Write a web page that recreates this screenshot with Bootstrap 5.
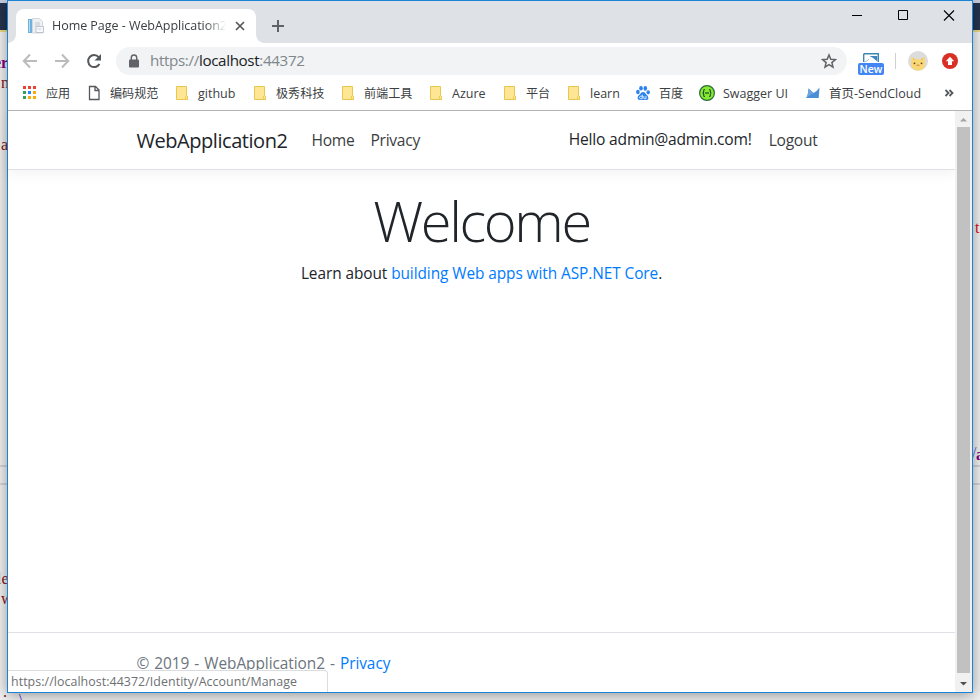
<!DOCTYPE html>
<html lang="en">
<head>
<meta charset="utf-8">
<title>Home Page - WebApplication2</title>
<link href="https://cdn.jsdelivr.net/npm/bootstrap@5.3.0/dist/css/bootstrap.min.css" rel="stylesheet">
<style>
html,body{height:700px;overflow:hidden}
body{font-family:"Open Sans","Noto Sans","Noto Sans CJK SC",sans-serif;color:#212529;background:#e9e9e9;line-height:1.5}
.desk{width:980px;height:700px;overflow:hidden;background:#f2f2f3}
.ide-bar{left:0;right:0;top:0;height:32px;background:#26344f;border-top:3px solid #c9cfdf;border-bottom:2px solid #efdc85}
.ide-rule{left:0;right:0;height:20px;border:2px solid #d5d5db;border-width:2px 0;top:465px}
.code{font:16px/18px "Liberation Serif",serif;color:#8b1010;white-space:pre}
.win{left:7px;top:0;width:966px;height:693px;border:1px solid #1883d7;background:#fff;box-shadow:0 2px 14px rgba(0,0,0,.4)}
.strip{height:42px;background:#dee1e6;flex:none}
.tab-on{width:240px;height:34px;margin:8px 0 0 8px;background:#fff;border-radius:8px 8px 0 0;padding:0 10px 0 12px;font-size:13px;color:#3c4043}
.tab-on::before,.tab-on::after{content:"";position:absolute;bottom:0;width:8px;height:8px}
.tab-on::before{left:-8px;background:radial-gradient(circle at 0 0,transparent 7.5px,#fff 8px)}
.tab-on::after{right:-8px;background:radial-gradient(circle at 100% 0,transparent 7.5px,#fff 8px)}
.tab-name{width:174px;margin-left:8px;padding-top:1px;overflow:hidden;white-space:nowrap;font-size:12.5px;letter-spacing:-.04px;-webkit-mask-image:linear-gradient(90deg,#000 88%,transparent);mask-image:linear-gradient(90deg,#000 88%,transparent)}
.tools{height:36px;flex:none;padding-left:14px}
.omni{width:731px;height:28px;border-radius:14px;background:#f1f3f4;margin-left:14px;padding:0 10px 0 12px}
.url{font-size:15.2px;letter-spacing:-.36px;color:#80868b;margin-left:10px;padding-bottom:2px}
.url b{font-weight:400;color:#202124}
.marks{height:31px;flex:none;display:grid;grid-template-columns:64px 88px 78px 88px 88px 74px 64px 69px 64px 106px 131px 20px;padding:0 0 3px 14px;font-size:12.5px;color:#3c4043}
.mk{display:flex;align-items:center;white-space:nowrap}
.mk span{padding-top:2px}
.mk svg{width:16px;height:16px;flex:none;margin-right:8px}
.mk-cjk{font-size:12.1px}
.view{border-top:1px solid #b4b4b4;min-height:0}
.page-c{width:690px;margin:0 auto}
.topnav{height:59px;padding-top:2px;border-bottom:1px solid #dee2e6;box-shadow:0 4px 12px rgba(0,0,0,.05)}
.brand{font-size:20px;letter-spacing:-.45px;color:#212529}
.lnk{font-size:15.6px;letter-spacing:-.28px;color:#3b3e41}
.hello{letter-spacing:-.2px;padding-bottom:2px;color:#212529}
.hero{font-size:56px;font-weight:300;line-height:1.2;letter-spacing:-2.35px;margin:17px 0 8px}
.learn{font-size:15.4px;letter-spacing:-.07px}
.blue{color:#007bff}
.foot{height:60px;padding-top:2px;border-top:1px solid #dee2e6;color:#6c757d;font-size:15.4px;letter-spacing:-.05px;word-spacing:1.1px}
.sb{width:17px;background:#f1f1f1;flex:none}
.thumb{width:13px;background:#c1c1c1;height:546px}
.stat{left:0;bottom:0;width:320px;height:22px;background:#fff;border:1px solid #dadce0;border-width:1px 1px 0 0;border-radius:0 4px 0 0;color:#6d7073;font-size:12.4px;letter-spacing:.06px;line-height:21px;padding-left:3px;white-space:nowrap}
.new{font-size:10.5px;font-weight:600;line-height:12px;background:#4285f4;color:#fff;width:26px;height:12px;border-radius:2px;text-align:center}
</style>
<script src="https://cdn.jsdelivr.net/npm/bootstrap@5.3.0/dist/js/bootstrap.bundle.min.js"></script>
</head>
<body>
<svg width="0" height="0" class="position-absolute"><defs>
<symbol id="folder" viewBox="0 0 16 16"><path d="M2.500 1.500h10v10h1v3h-11z" fill="#ffe694" stroke="#e9c64d"/><path d="M11.500 14V11q1-1.500 2 0v3.500z" fill="#ffe694" stroke="#e9c64d" stroke-width=".8"/></symbol>
</defs></svg>
<div class="desk position-relative">
  <div class="ide-bar position-absolute"></div>
  <div class="ide-rule position-absolute"></div>
  <div class="code position-absolute fw-bold" style="left:-6px;top:54px;color:#800080">er</div>
  <div class="code position-absolute" style="left:1px;top:74px">n</div>
  <div class="code position-absolute" style="left:1px;top:136px">a</div>
  <div class="code position-absolute" style="left:-3px;top:570px">le</div>
  <div class="code position-absolute" style="left:1px;top:590px">w</div>
  <div class="code position-absolute" style="left:3px;top:683px">.</div>
  <div class="code position-absolute" style="left:19px;top:691px;color:#5a20d0">\</div>
  <div class="code position-absolute" style="left:975px;top:219px;color:#e01010">t</div>
  <div class="code position-absolute" style="left:972px;top:444px;color:#4a5ae0">/</div>
  <div class="code position-absolute fw-bold" style="left:976px;top:446px;color:#800080">a</div>

  <div class="win position-absolute d-flex flex-column">
    <div class="strip d-flex">
      <div class="tab-on position-relative d-flex align-items-center">
        <svg width="16" height="16" viewBox="0 0 16 16"><path d="M0 1h4v14H0z" fill="#6eb1dc"/><path d="M1 2h1v12H1z" fill="#b7dcf1"/><path d="M4.500.5h7l3 3V15h-10z" fill="#edf0f4" stroke="#d3d8df"/><path d="M7 5h5M7 7h5" stroke="#c5cad1"/><path d="M8 8.500h7.500v6H8z" fill="#f8f9fb" stroke="#bdc4ce"/><path d="M9.500 11h4" stroke="#cbd1d8"/></svg>
        <span class="tab-name">Home Page - WebApplication2</span>
        <svg class="ms-auto" width="12" height="12" viewBox="0 0 12 12"><path d="M2 2l8 8M10 2l-8 8" stroke="#54575b" stroke-width="1.700"/></svg>
      </div>
      <svg class="mt-3" style="margin-left:15px" width="14" height="16" viewBox="0 0 14 16"><path d="M1 9h12M7 3v12" stroke="#5f6368" stroke-width="2"/></svg>
      <div class="ms-auto d-flex" style="gap:34px;padding:9px 17px 0 0">
        <svg width="12" height="12"><path d="M1 5.500h10" stroke="#000"/></svg>
        <svg width="12" height="12"><path d="M1.500.5h9v9h-9z" stroke="#000" fill="none"/></svg>
        <svg width="12" height="12"><path d="M1 .5l10 10M11 .5L1 10.500" stroke="#000" stroke-width="1.100"/></svg>
      </div>
    </div>
    <div class="tools d-flex align-items-center">
      <svg width="16" height="16" viewBox="0 0 16 16"><path d="M15 8H2M8 1.500L1.800 8 8 14.500" stroke="#b9bbbd" stroke-width="2" fill="none"/></svg>
      <svg class="ms-3" width="16" height="16" viewBox="0 0 16 16"><path d="M1 8h13M8 1.500L14.200 8 8 14.500" stroke="#b9bbbd" stroke-width="2" fill="none"/></svg>
      <svg class="ms-3" width="16" height="16" viewBox="0 0 16 16"><path d="M13.400 11A6 6 0 1 1 12.700 4.200" stroke="#55585d" stroke-width="2" fill="none"/><path d="M15 1v6.500H8.500z" fill="#55585d"/></svg>
      <div class="omni d-flex align-items-center">
        <svg width="12" height="14" viewBox="0 0 12 14"><path d="M2 5.500h8q1 0 1 1v6q0 1-1 1H2q-1 0-1-1v-6q0-1 1-1z" fill="#5f6368"/><path d="M3.300 6V3.700a2.700 2.700 0 0 1 5.400 0V6" stroke="#5f6368" stroke-width="1.400" fill="none"/></svg>
        <span class="url">https://<b>localhost</b>:44372</span>
        <svg class="ms-auto" width="16" height="16" viewBox="0 0 16 16"><path d="M8 2l1.800 4.200 4.600.4-3.500 3 1.100 4.500L8 11.700 4 14.100l1.100-4.500-3.500-3 4.600-.4z" fill="none" stroke="#5f6368" stroke-width="1.500"/></svg>
      </div>
      <div class="d-flex flex-column align-items-center" style="margin-left:11px;padding-top:6px">
        <svg width="16" height="10" viewBox="0 0 16 10"><path d="M.7.7h14.600V9M.7.7V9" fill="none" stroke="#3d87b5" stroke-width="1.400"/><path d="M6.500 3h7.800v5.500q-3-3.500-7.800-5.500z" fill="#3d87c0"/><path d="M1 9q4-1 5-3" stroke="#9bc5df" fill="none"/></svg>
        <div class="new">New</div>
      </div>
      <div style="width:1px;height:16px;background:#cfd1d4;margin-left:11px"></div>
      <svg style="margin-left:12px" width="20" height="20" viewBox="0 0 20 20"><circle cx="10" cy="10" r="10" fill="#dcdcdc"/><path d="M3.500 5.500l3.500 2.700h6l3.500-2.700.6 7.500q-.8 6.500-7.100 6.500T3 13z" fill="#f8d775"/><path d="M5 7l2 2M15 7l-2 2" stroke="#edb85a"/><circle cx="6.500" cy="12.300" r=".9" fill="#574025"/><circle cx="13.500" cy="12.300" r=".9" fill="#574025"/><path d="M8.500 14.500L10 14l1.500.5" stroke="#d37a58" fill="none"/></svg>
      <svg style="margin-left:14px" width="16" height="16" viewBox="0 0 16 16"><circle cx="8" cy="8" r="8" fill="#d93025"/><path d="M8 3.800l4.200 4.400H10V12H6V8.200H3.800z" fill="#fff"/></svg>
    </div>
    <div class="marks">
      <div class="mk mk-cjk"><svg viewBox="0 0 16 16"><path d="M1 1h3v3H1zM6 1h3v3H6zM11 1h3v3h-3z" fill="#ea4335"/><path d="M1 6h3v3H1zM1 11h3v3H1z" fill="#34a05a"/><path d="M6 6h3v3H6z" fill="#2684fc"/><path d="M11 6h3v3h-3zM6 11h3v3H6zM11 11h3v3h-3z" fill="#fbac06"/></svg><span>应用</span></div>
      <div class="mk mk-cjk"><svg viewBox="0 0 16 16"><path d="M3.500 1.500h6l3.500 3.500v9.500H3.500zM9 1.500v4h4" fill="#fff" stroke="#55585c" stroke-width="1.300"/></svg><span>编码规范</span></div>
      <div class="mk"><svg><use href="#folder"/></svg><span>github</span></div>
      <div class="mk mk-cjk"><svg><use href="#folder"/></svg><span>极秀科技</span></div>
      <div class="mk mk-cjk"><svg><use href="#folder"/></svg><span>前端工具</span></div>
      <div class="mk"><svg><use href="#folder"/></svg><span>Azure</span></div>
      <div class="mk mk-cjk"><svg><use href="#folder"/></svg><span>平台</span></div>
      <div class="mk"><svg><use href="#folder"/></svg><span>learn</span></div>
      <div class="mk mk-cjk"><svg viewBox="0 0 16 16"><g fill="#2d83ee"><ellipse cx="2.900" cy="7" rx="1.800" ry="2.200"/><ellipse cx="6" cy="3.200" rx="1.800" ry="2.300"/><ellipse cx="10.300" cy="3.400" rx="1.800" ry="2.300"/><ellipse cx="13.200" cy="7.300" rx="1.700" ry="2.100"/><path d="M8 7q2 0 3 2.200 3 2 2.500 4.300-.8 2-3.500 1.500H5.500Q2.500 15.300 2.500 13q0-2 2.500-3.800Q6.200 7 8 7z"/></g><path d="M7.300 9.700v4H5.700q-1.200-.2-1.200-1.200t1.200-1.300h1.600M8.800 11v2.200q0 .5.600.5H11V11" fill="none" stroke="#fff" stroke-width=".8"/></svg><span>百度</span></div>
      <div class="mk"><svg viewBox="0 0 16 16"><circle cx="8" cy="8" r="7.400" fill="#85ea2d" stroke="#2c6a3e" stroke-width="1.200"/><path d="M6 4.500q-1.500 0-1.300 1.700Q4.700 8 3.500 8q1.200 0 1.200 1.800-.2 1.700 1.300 1.700M10 4.500q1.500 0 1.300 1.700Q11.300 8 12.500 8q-1.200 0-1.200 1.800.2 1.700-1.300 1.700" fill="none" stroke="#254d36" stroke-width="1.200"/><path d="M6 8h4" stroke="#254d36" stroke-width="1.300"/></svg><span>Swagger UI</span></div>
      <div class="mk"><svg viewBox="0 0 16 16"><path d="M1 13q2-1.500 2.500-9.500l5 4.500q3-1 6-5.500l-.8 10.500z" fill="#4a8fd6"/><path d="M3.500 3.500l5 4.500L1 13q2-2 2.500-9.500z" fill="#6ba3df"/></svg><span>首页-SendCloud</span></div>
      <div class="mk" style="padding-left:8px"><svg viewBox="0 0 16 16" style="margin:0"><path d="M1.500 5l3 3-3 3M5.500 5l3 3-3 3" fill="none" stroke="#55595e" stroke-width="1.800"/></svg></div>
    </div>
    <div class="view d-flex flex-grow-1">
      <div class="d-flex flex-column flex-grow-1">
        <header class="topnav flex-shrink-0">
          <nav class="page-c h-100 d-flex align-items-center">
            <a class="brand text-decoration-none">WebApplication2</a>
            <a class="lnk text-decoration-none" style="margin-left:24px">Home</a>
            <a class="lnk text-decoration-none ms-3">Privacy</a>
            <a class="lnk hello text-decoration-none ms-auto">Hello admin@admin.com!</a>
            <a class="lnk text-decoration-none" style="margin:0 9px 0 17px">Logout</a>
          </nav>
        </header>
        <main class="flex-grow-1 text-center">
          <h1 class="hero">Welcome</h1>
          <p class="learn m-0">Learn about <a class="blue text-decoration-none">building Web apps with ASP.NET Core</a>.</p>
        </main>
        <footer class="foot flex-shrink-0"><div class="page-c h-100 d-flex align-items-center"><span>© 2019 - WebApplication2 - <a class="blue text-decoration-none">Privacy</a></span></div></footer>
      </div>
      <div class="sb d-flex flex-column align-items-center">
        <svg width="17" height="17" class="flex-shrink-0" style="margin-bottom:-1px"><path d="M5 10.500L8.500 7l3.500 3.500z" fill="#a3a3a3"/></svg>
        <div class="thumb flex-shrink-0"></div>
        <svg width="17" height="17" class="mt-auto"><path d="M5 7l3.500 3.500L12 7z" fill="#505050"/></svg>
      </div>
    </div>
    <div class="stat position-absolute">https://localhost:44372/Identity/Account/Manage</div>
  </div>
</div>
</body>
</html>
